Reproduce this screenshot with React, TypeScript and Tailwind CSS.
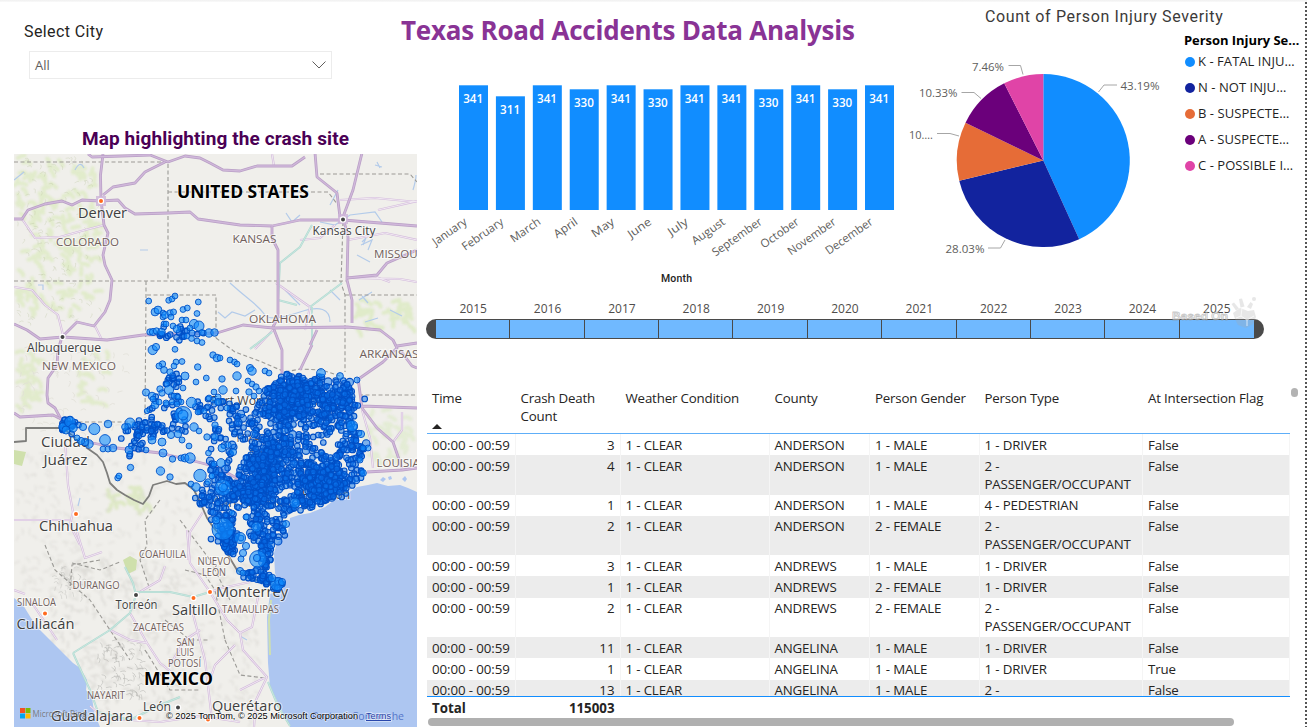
import React from "react";

/* ---------- shared data ---------- */

const months: [string, number][] = [
  ["January", 341], ["February", 311], ["March", 341], ["April", 330],
  ["May", 341], ["June", 330], ["July", 341], ["August", 341],
  ["September", 330], ["October", 341], ["November", 330], ["December", 341],
];
const monthWidths = [39, 48, 34, 26, 25, 26, 22, 38, 58, 44, 56, 55];

const severity = [
  { label: "K - FATAL INJU…", pct: 43.19, color: "#118dff" },
  { label: "N - NOT INJU…", pct: 28.03, color: "#12239e" },
  { label: "B - SUSPECTE…", pct: 10.99, color: "#e66c37" },
  { label: "A - SUSPECTE…", pct: 10.33, color: "#6b007b" },
  { label: "C - POSSIBLE I…", pct: 7.46, color: "#e044a7" },
];

const years = [2015, 2016, 2017, 2018, 2019, 2020, 2021, 2022, 2023, 2024, 2025];

const rows: string[][] = [
  ["3", "ANDERSON", "1 - MALE", "1 - DRIVER", "False"],
  ["4", "ANDERSON", "1 - MALE", "2 - PASSENGER/OCCUPANT", "False"],
  ["1", "ANDERSON", "1 - MALE", "4 - PEDESTRIAN", "False"],
  ["2", "ANDERSON", "2 - FEMALE", "2 - PASSENGER/OCCUPANT", "False"],
  ["3", "ANDREWS", "1 - MALE", "1 - DRIVER", "False"],
  ["1", "ANDREWS", "2 - FEMALE", "1 - DRIVER", "False"],
  ["2", "ANDREWS", "2 - FEMALE", "2 - PASSENGER/OCCUPANT", "False"],
  ["11", "ANGELINA", "1 - MALE", "1 - DRIVER", "False"],
  ["1", "ANGELINA", "1 - MALE", "1 - DRIVER", "True"],
  ["13", "ANGELINA", "1 - MALE", "2 - PASSENGER/OCCUPANT", "False"],
];

const GRID = "grid grid-cols-[88.5px_105px_149px_100.5px_109.5px_163.5px_147px]";

/* ---------- map geometry ---------- */

type P = [number, number];
type Dot = [number, number, number];

function rng(seed: number) {
  let s = seed;
  return () => {
    s = (s * 1664525 + 1013904223) % 4294967296;
    return s / 4294967296;
  };
}

function inside(x: number, y: number, poly: P[]) {
  let c = false;
  for (let i = 0, j = poly.length - 1; i < poly.length; j = i++) {
    const [xi, yi] = poly[i];
    const [xj, yj] = poly[j];
    if (yi > y !== yj > y && x < ((xj - xi) * (y - yi)) / (yj - yi) + xi) c = !c;
  }
  return c;
}

const eastTexas: P[] = [
  [272, 382], [278, 375], [296, 373], [306, 378], [320, 375], [334, 381], [342, 378], [355, 382], [356, 412], [352, 422],
  [362, 434], [368, 447], [362, 458], [352, 462], [364, 470], [362, 478], [346, 486], [338, 494], [326, 502],
  [311, 509], [292, 512], [284, 518], [276, 508], [262, 506], [246, 502], [232, 496], [228, 478], [240, 468], [246, 455],
  [252, 438], [248, 424], [254, 408], [264, 398],
];
const hillCountry: P[] = [
  [208, 398], [240, 404], [258, 415], [248, 440], [232, 462], [240, 500], [212, 514], [203, 505], [196, 490], [210, 480],
  [209, 440],
];
const southTexas: P[] = [[212, 506], [236, 508], [234, 545], [228, 556], [218, 534], [210, 520]];
const coastBend: P[] = [[248, 514], [262, 506], [284, 522], [286, 536], [276, 544], [262, 546], [250, 540]];
const valleyWest: P[] = [[224, 530], [238, 528], [236, 550], [232, 560], [224, 545]];
const valleyEast: P[] = [[260, 540], [272, 544], [270, 574], [284, 584], [276, 590], [262, 582], [240, 577], [248, 572], [262, 568]];
const holes: Dot[] = [
  [299, 425, 5], [270, 426, 3.5], [317, 442, 4], [330, 448, 6], [285, 492, 4.5], [295, 446, 3], [337, 437, 4], [276, 434, 2.5],
  [342, 461, 3], [226, 432, 5], [222, 456, 5], [232, 474, 4], [305, 457, 3], [310, 431, 3], [221, 415, 4],
];

function buildRandomDots(): Dot[] {
  const r = rng(77);
  const out: Dot[] = [];
  const fill = (poly: P[], n: number) => {
    const xs = poly.map((p) => p[0]);
    const ys = poly.map((p) => p[1]);
    const x0 = Math.min(...xs), x1 = Math.max(...xs), y0 = Math.min(...ys), y1 = Math.max(...ys);
    let k = 0;
    while (k < n) {
      const x = x0 + r() * (x1 - x0);
      const y = y0 + r() * (y1 - y0);
      if (!inside(x, y, poly)) continue;
      if (holes.some((h) => Math.hypot(h[0] - x, h[1] - y) < h[2] + 2)) { k += 0.2; continue; }
      out.push([x, y, r() < 0.08 ? 3.8 : 2.8]);
      k++;
    }
  };
  const cluster = (cx: number, cy: number, sx: number, sy: number, n: number) => {
    for (let i = 0; i < n; i++) {
      const gx = r() + r() + r() - 1.5;
      const gy = r() + r() + r() - 1.5;
      out.push([cx + gx * sx * 2, cy + gy * sy * 2, 2.8]);
    }
  };
  fill(eastTexas, 850);
  fill(hillCountry, 110);
  fill(southTexas, 50);
  fill(coastBend, 75);
  fill(valleyWest, 26);
  fill(valleyEast, 70);
  cluster(291, 401, 13, 10, 230);
  cluster(323, 482, 11, 8, 210);
  cluster(267, 470, 8, 11, 110);
  cluster(252, 493, 9, 6, 110);
  cluster(330, 404, 14, 10, 70);
  cluster(276, 450, 9, 10, 50);
  cluster(160, 427, 10, 5, 36);
  cluster(136, 435, 8, 9, 28);
  cluster(68, 426, 4, 4, 22);
  cluster(173, 379, 4, 4, 14);
  cluster(178, 333, 11, 3.5, 20);
  cluster(206, 409, 5, 5, 14);
  cluster(166, 412, 11, 8, 16);
  cluster(226, 539, 6, 8, 20);
  cluster(204, 500, 5, 6, 12);
  return out;
}

const fixedDots: Dot[] = [
  [148.7, 301, 2.9], [168.7, 300.3, 2.9], [172, 299, 2.9], [175, 296, 2.9], [198.3, 302, 2.9], [183, 309.5, 2.9], [187.3, 308, 2.9],
  [197, 313.5, 2.9], [155, 312, 3.9], [158, 310, 3.9], [163, 313, 2.9], [163, 317, 2.9], [165, 315, 3.6], [170, 313, 3.2], [173.5, 312, 3],
  [171, 317, 2.9], [164, 324, 2.9], [166, 324, 2.9], [182, 320, 2.9], [186, 320, 2.9], [194, 324, 4.6], [199, 326, 5], [190, 328, 2.9],
  [150, 332, 3.2], [153, 332, 3.6], [156.5, 331, 3.2], [161.5, 332, 3.8], [173, 326, 2.9], [177, 329, 3.8], [192, 333, 3], [202, 332.5, 3],
  [209, 333, 4.2], [214.5, 332.5, 3.8], [187, 336, 2.9], [191.5, 338.5, 2.9], [197, 341, 2.9], [202, 342.5, 2.9],
  [152.7, 350, 4.6], [156, 347, 3.6], [175, 349.3, 2.9], [162.5, 364, 3.2], [159, 366, 3], [164, 370, 3.4], [176, 362, 2.9], [182, 361.5, 2.9],
  [174, 366, 2.9], [197.7, 367, 3.2], [206.3, 378, 2.9], [196, 382, 2.9], [185, 376, 4], [170, 372, 3.2], [167, 384, 2.9], [183, 388, 2.9],
  [146, 392.5, 3.6], [152, 396, 3.8], [153, 399, 2.9], [160, 389, 3.2], [162, 393, 3.2], [169, 390, 4.6], [174, 396, 2.9], [178, 397, 2.9],
  [181, 402, 2.9], [191.5, 402.5, 5.2], [147, 411, 2.7], [155, 405, 3.8], [159, 402, 2.9], [166, 403, 3], [172, 402, 2.9], [177, 404, 2.9],
  [183, 415, 8.5], [183, 415, 5], [194, 427, 4.2], [199, 431, 2.9], [198, 412, 2.9], [204, 411, 2.9],
  [83, 427, 3.6], [94.3, 429, 5.6], [108, 424, 3.8], [105, 440, 5.4], [89, 444, 4.2], [85, 442, 3.8], [81, 441, 3.6], [77, 438, 3],
  [103, 449, 2.9], [108, 449, 3], [113, 448, 3.8], [63, 427, 4.2], [70, 422, 5.4], [73, 428, 4.2], [66, 430, 4],
  [129, 450, 4], [130, 423, 5], [125, 427, 3.4], [146, 450, 2.9], [163, 453, 4], [172.5, 459, 3.2], [181, 458, 3], [185, 458, 4], [190, 458, 5.2],
  [189, 446, 2.9], [208.5, 453, 2.9], [117.7, 478, 2.9], [119, 476, 2.9], [130.5, 467.5, 3.2], [160.5, 471, 4.2], [170, 477, 3.2],
  [200, 475.5, 6.2], [208, 482, 3.2], [191, 484, 2.9], [196, 487, 4.2], [212, 476, 3], [171, 435, 3.6], [178, 434, 3.8], [182, 440, 3], [162, 442, 4],
  [152, 440, 4], [207, 437, 3.2], [215, 425, 3.2], [213, 400, 3], [209, 398, 2.9], [214, 392, 2.9],
  [213, 355, 3.2], [217, 358, 3.8], [220, 358, 2.9], [230, 360, 2.9], [234.5, 362, 2.9], [237, 364, 2.9], [250, 368, 3.6], [252, 371, 4.2],
  [222, 379, 3.2], [237, 376, 4.2], [248, 381, 2.9], [252, 384, 2.9], [256, 387, 3.2], [259, 391, 2.9], [265, 371, 2.9], [269, 373, 2.9], [223, 390, 4.2],
  [236, 391, 2.9], [249, 392, 3.2], [218, 397, 3], [254, 396, 2.9], [218, 402, 3.6], [227, 408, 3], [321, 373, 4.4], [215, 437, 3.6], [222, 448, 4],
  [228, 445, 3.2], [233, 452, 3.6], [214, 464, 3], [221, 463, 4.4], [212, 476, 2.9], [223, 487.5, 8], [223, 487.5, 4.4], [223, 529, 11], [216, 520, 4],
  [232, 513, 2.9], [247, 517, 3.2], [256.5, 527, 5], [246, 517, 3], [295, 503, 5], [240, 538, 5.6], [246, 546, 3.6], [243, 553, 3.6], [241, 559, 3],
  [258, 559, 8.4], [257, 558, 3.6], [240, 571, 3.6], [243, 573, 3], [277, 584, 6.6], [282, 582, 3.6], [272, 578, 3.8], [352, 426, 5.6],
  [361, 434, 3.6], [368, 448, 3], [363, 448, 3], [360, 460, 3], [357, 380, 3], [340, 376, 3.4], [363, 473, 3.4], [286, 524, 3.6],
];

function buildRelief() {
  const r = rng(9);
  const areas: { box: [number, number, number, number]; n: number; color: string; len: number; w: number; o: number; soft?: boolean }[] = [
    { box: [16, 158, 96, 310], n: 150, color: "#cde6a0", len: 7, w: 4, o: 0.42, soft: true },
    { box: [16, 156, 100, 325], n: 130, color: "#b3bf98", len: 4, w: 0.7, o: 0.4 },
    { box: [14, 352, 40, 406], n: 30, color: "#d3e8ae", len: 7, w: 4, o: 0.5, soft: true },
    { box: [78, 350, 108, 416], n: 18, color: "#d3e8ae", len: 7, w: 4, o: 0.5, soft: true },
    { box: [106, 484, 152, 508], n: 20, color: "#cfe4a8", len: 7, w: 4, o: 0.55, soft: true },
    { box: [352, 298, 410, 330], n: 34, color: "#d0e8a8", len: 7, w: 4, o: 0.5, soft: true },
    { box: [365, 410, 410, 464], n: 30, color: "#d8eabf", len: 7, w: 4, o: 0.5, soft: true },
    { box: [14, 450, 195, 595], n: 240, color: "#dad9d4", len: 5, w: 1.4, o: 0.6, soft: true },
    { box: [50, 560, 175, 722], n: 280, color: "#d2d1cc", len: 6, w: 1.6, o: 0.6, soft: true },
    { box: [170, 560, 258, 722], n: 200, color: "#d8d7d2", len: 5, w: 1.5, o: 0.6, soft: true },
    { box: [98, 640, 146, 696], n: 90, color: "#b5b4b0", len: 5, w: 0.9, o: 0.6 },
    { box: [52, 560, 84, 600], n: 40, color: "#bdbcb8", len: 4, w: 0.9, o: 0.5 },
    { box: [14, 345, 130, 435], n: 80, color: "#e0ded6", len: 5, w: 1, o: 0.7 },
  ];
  return areas.map((a) => {
    let d = "";
    for (let i = 0; i < a.n; i++) {
      const x = a.box[0] + r() * (a.box[2] - a.box[0]);
      const y = a.box[1] + r() * (a.box[3] - a.box[1]);
      const t = r() * 2.4 - 0.4;
      const dx = Math.cos(t) * a.len;
      const dy = Math.sin(t) * a.len;
      d += `M${x.toFixed(1)} ${y.toFixed(1)}q${(dx / 2 + r() * 3).toFixed(1)} ${(dy / 2 - r() * 3).toFixed(1)} ${dx.toFixed(1)} ${dy.toFixed(1)}`;
    }
    return { d, color: a.color, w: a.w, o: a.o, soft: a.soft };
  });
}

const denseDots = buildRandomDots();
const relief = buildRelief();

const highways = [
  "M103 154L100.500 175 101 200 104 225 108 233 103 255 105 265 112 280 110 300 105 312 94 326 77 322 62 337 58 350 57 365 48 378 47 395 48 403 55 408 63 423",
  "M14 219H22L28 210 45 204 62 201 72 205 82 200 100 201 118 200 125 208 135 214 168 213 190 212 198 219 240 225 272 226 300 220 343 220 417 226",
  "M103 195L113 187 135 183 145 172 165 162M88 154L92 157 150 155 168 162 185 156 200 158 210 163 223 170 240 171 257 166 292 166 305 157",
  "M272 226V238L278 250V317L273 327 282 350 282 375",
  "M315 153L317 177 337 193 340 217M362 153L353 190 343 217 348 237 347 280 352 300 352 323",
  "M273 328L347 327 380 330 393 340 397 348 383 362 360 378M397 346L417 343M273 328L243 325 217 333 143 335 107 340 63 337 40 339 27 330 14 324",
  "M347 278L377 275 387 263 417 250",
  "M14 413L20 417 53 415 63 420M88 442L117 448 160 453 190 460 217 467 240 480",
  "M358 378L362 408 377 428 393 442 402 468M362 406L417 408M367 472L402 470 417 468",
  "M312 345L300 370M317 330L310 345M400 350L412 366 417 368",
];
const minorRoads = [
  "M14 287L32 290 45 305 58 315 63 335M22 219L35 238 60 237 85 230 104 225",
  "M65 440L68 485 73 512 70 525 80 545M14 520L70 520",
  "M378 210L417 201M340 200L375 198 417 202M348 240L385 233 417 240M300 240L320 238 335 225",
  "M373 468L370 438 362 410M402 412L402 430 393 442M276 283L310 307 305 330M255 349L273 330M95 326L102 340M272 154L274 166",
  "M77 532L85 558 102 552M187 530L190 563 210 592 227 620 240 633 243 650 267 677 256 700 254 727M240 633L252 627 258 597",
  "M130 613L147 643 160 663 175 675M110 630L130 640 147 643M138 593L160 580 165 566M203 512L190 532 188 560",
  "M170 665L185 640 200 630M235 645L215 665 210 680M240 690L264 678M30 600L57 640M192 610L205 660 212 720",
  "M90 706L105 719 130 720 160 722 200 716 240 722M14 590L25 594M250 582L222 588 210 592M352 278L400 279 417 282M376 277L390 282",
];
const tealRoads = [
  "M125 567L133 583 136 595 130 613 110 630 73 653M136 592L170 592 193 597 210 592",
  "M312 225L300 247 280 263 278 300 297 305M310 307L342 283M73 653L90 690 98 712 130 720 160 705 180 697M268 682L278 706 290 726M250 349L272 332M312 307L312 345",
];
const rivers = [
  "M230 283Q240 292 250 300T265 315 300 312 330 322M218 312L225 318 232 312 245 316 255 310M320 222L335 225 350 215 375 212 382 222",
  "M286 213L292 222 300 215M361 245L372 240 368 250M357 255L370 262M285 290L300 305M330 290L340 300M300 440L310 448",
  "M140 250L148 250M38 285H43V290M80 498L78 506M240 636L247 640M375 165L382 167M377 162L380 168M330 205L338 190M363 245L366 238 362 242",
  "M359 300L372 292M362 296L368 303M390 310L402 316M365 322L378 318M413 190Q416 180 416 175M14 180L24 172M75 170Q80 160 84 168",
];
const stateLines =
  "M14 162H168V281M14 281H347M168 192H328L338 205M146 281V295L145 418M147 295H216V338M72 422H145M320 174H410L417 182M343 222L341 283 345 295V327L345 372M345 295H417M216 338L235 352 262 362 285 372 300 369 322 370 340 376M359 395H417" +
  "M72 563L100 570 120 562M160 500L145 520 147 545 140 560 150 590M45 545L55 570 90 600 130 660M185 570L205 575 215 590 225 640M165 620L190 640 210 640M145 650L170 690 200 690M225 640L240 675 265 678M100 560L72 565 70 590M180 520L210 560 230 600";

interface MapLabel { t: string; x: number; y: number; w: number; s: number; k: "city" | "state" | "country" }
const labels: MapLabel[] = [
  { t: "Denver", x: 78, y: 217.5, w: 49, s: 14.5, k: "city" },
  { t: "Kansas City", x: 312.5, y: 235, w: 63, s: 12.5, k: "city" },
  { t: "Albuquerque", x: 27, y: 351.5, w: 74, s: 13, k: "city" },
  { t: "Ciudad", x: 41, y: 447, w: 49, s: 14.5, k: "city" },
  { t: "Juárez", x: 43.5, y: 464.5, w: 44, s: 14.5, k: "city" },
  { t: "Chihuahua", x: 39, y: 530.5, w: 74, s: 14.5, k: "city" },
  { t: "Torreón", x: 115.5, y: 609, w: 42, s: 12.5, k: "city" },
  { t: "Saltillo", x: 172, y: 614.5, w: 45, s: 14, k: "city" },
  { t: "Monterrey", x: 216, y: 597, w: 72, s: 14.5, k: "city" },
  { t: "Culiacán", x: 16.5, y: 628.5, w: 58, s: 14.5, k: "city" },
  { t: "Guadalajara", x: 51, y: 721, w: 82, s: 14, k: "city" },
  { t: "León", x: 143, y: 711, w: 28, s: 13, k: "city" },
  { t: "Querétaro", x: 212, y: 711, w: 70, s: 14, k: "city" },
  { t: "Fort Worth", x: 211, y: 404.5, w: 62, s: 13, k: "city" },
  { t: "Dallas", x: 300, y: 405, w: 34, s: 13, k: "city" },
  { t: "Austin", x: 248, y: 458, w: 36, s: 13, k: "city" },
  { t: "San Antonio", x: 214, y: 507, w: 74, s: 13, k: "city" },
  { t: "Houston", x: 302, y: 499, w: 48, s: 13, k: "city" },
  { t: "COLORADO", x: 56, y: 245.5, w: 63, s: 11.5, k: "state" },
  { t: "KANSAS", x: 232.5, y: 243, w: 44, s: 11.5, k: "state" },
  { t: "MISSOURI", x: 374, y: 257.5, w: 54, s: 11.5, k: "state" },
  { t: "OKLAHOMA", x: 249, y: 323, w: 67, s: 11.5, k: "state" },
  { t: "ARKANSAS", x: 359.5, y: 357.5, w: 59, s: 11.5, k: "state" },
  { t: "NEW MEXICO", x: 42, y: 369.5, w: 74, s: 11.5, k: "state" },
  { t: "TEXAS", x: 235, y: 442, w: 32, s: 11.5, k: "state" },
  { t: "LOUISIANA", x: 376.5, y: 466.5, w: 59, s: 11.5, k: "state" },
  { t: "COAHUILA", x: 139, y: 558, w: 47, s: 10, k: "state" },
  { t: "NUEVO", x: 197.5, y: 565, w: 33, s: 10, k: "state" },
  { t: "LEÓN", x: 202, y: 575.5, w: 24, s: 10, k: "state" },
  { t: "DURANGO", x: 72.5, y: 589, w: 47, s: 10, k: "state" },
  { t: "SINALOA", x: 17, y: 606, w: 39, s: 10, k: "state" },
  { t: "TAMAULIPAS", x: 222, y: 612.5, w: 57, s: 10, k: "state" },
  { t: "ZACATECAS", x: 133, y: 631, w: 51, s: 10, k: "state" },
  { t: "SAN", x: 176.5, y: 645.5, w: 18, s: 10, k: "state" },
  { t: "LUIS", x: 176, y: 656, w: 18, s: 10, k: "state" },
  { t: "POTOSÍ", x: 168, y: 667, w: 33, s: 10, k: "state" },
  { t: "NAYARIT", x: 87, y: 698.5, w: 38, s: 10, k: "state" },
  { t: "UNITED STATES", x: 177, y: 198, w: 132, s: 18, k: "country" },
  { t: "MEXICO", x: 144, y: 685, w: 69, s: 18.5, k: "country" },
];
const labelClass = {
  city: "fill-[#3f3f3f] font-medium",
  state: "fill-[#71605c] font-medium",
  country: "fill-black font-bold",
};

const cityDots: [number, number, string][] = [
  [101, 201, "#ff6a1f"], [343, 219.5, "#444"], [62.5, 337, "#444"], [76, 514, "#ff6a1f"], [45, 613.5, "#ff6a1f"],
  [136, 595, "#444"], [193.5, 598, "#ff6a1f"], [210, 592, "#ff6a1f"], [178, 707.5, "#444"], [139.5, 718, "#ff6a1f"], [208, 719.5, "#ff6a1f"],
];

function CrashMap() {
  return (
    <svg viewBox="14 154 403 573" className="ml-[14px] block h-[573px] w-[403px] shrink-0 font-['Open_Sans','Noto_Sans',sans-serif]">
      <rect x="14" y="154" width="403" height="573" fill="#f0efeb" />
      {relief.map((a, i) => (
        <path
          key={i} d={a.d} fill="none" stroke={a.color} strokeWidth={a.w} strokeOpacity={a.o} strokeLinecap="round"
          className={a.soft ? "blur-[0.8px]" : undefined}
        />
      ))}
      <path d="M123 560L130 556 137 560 136 570 128 574ZM14 450L26 452 22 466 14 464Z" fill="#cfe0ac" />
      <g fill="#adc6f1">
        <path d="M417 492L408 488 400 485 388 486 377 483 368 485 357 487 348 493 337 498 325 507 310 513 299 515 290 518 288 532 277 543 274 553 275 573 281 590 270 594 267 617 268 663 270 687 278 703 290 727H417Z" />
        <path d="M14 598L23 605 31 618 40 630 57 647 73 663 80 668 87 680 86 690 92 697 94 712 100 727H14Z" />
        <path d="M380 480l3-3 3 2-3 3zM388 477l3-1 1 3-3 1zM402 479l3-3 2 3-2 3z" />
      </g>
      <path d="M271 600L269 620 270 655" fill="none" stroke="#cfe0b0" strokeWidth="2" />
      {rivers.map((d) => <path key={d} d={d} fill="none" stroke="#b3cbea" strokeWidth="1.2" />)}
      <path d={stateLines} fill="none" stroke="#9b9a96" strokeWidth="1.1" strokeDasharray="4 2.5" />
      {minorRoads.map((d) => (
        <g key={d} fill="none" strokeLinejoin="round">
          <path d={d} stroke="#d3bbdc" strokeWidth="2.2" />
          <path d={d} stroke="#f4edf4" strokeWidth="0.9" />
        </g>
      ))}
      {tealRoads.map((d) => (
        <g key={d} fill="none" strokeLinejoin="round">
          <path d={d} stroke="#afd9d0" strokeWidth="2" />
          <path d={d} stroke="#d3ece6" strokeWidth="0.7" />
        </g>
      ))}
      {highways.map((d) => (
        <g key={d} fill="none" strokeLinejoin="round">
          <path d={d} stroke="#b99fc6" strokeWidth="2.8" />
          <path d={d} stroke="#d0b8da" strokeWidth="1.3" />
        </g>
      ))}
      <path
        d="M14 442L26 441V428H63L75 438 87 448 97 455 103 462 107 473 110 483 117 490 125 495 134 500 143 504 149 496 153 485 160 483 167 481 176 484 185 483 194 490 200 502 207 518 213 527 220 535 228 555 237 570 248 577 270 585"
        fill="none" stroke="#7d7d7b" strokeWidth="1.8" strokeLinejoin="round"
      />
      <path d="M96 196h10v10h-10zM338 214h10v10h-10z" fill="#cdb4d8" fillOpacity="0.8" />
      {cityDots.map(([x, y, c]) => (
        <circle key={`${x}-${y}`} cx={x} cy={y} r="2.6" fill={c} stroke="#fff" strokeWidth="1.2" />
      ))}
      {labels.map((l) => (
        <text
          key={l.t} x={l.x} y={l.y} fontSize={l.s} textLength={l.w} lengthAdjust="spacingAndGlyphs"
          stroke="#ffffff" strokeOpacity="0.6" strokeWidth="2" paintOrder="stroke" className={labelClass[l.k]}
        >
          {l.t}
        </text>
      ))}
      <g fill="#0a74ee" fillOpacity="0.5" stroke="#004fc6" strokeWidth="1.1">
        {denseDots.map(([x, y, r], i) => <circle key={i} cx={x.toFixed(1)} cy={y.toFixed(1)} r={r} />)}
      </g>
      <g fill="#118dff" fillOpacity="0.6" stroke="#0052c8" strokeOpacity="0.9" strokeWidth="1">
        {fixedDots.map(([x, y, r], i) => <circle key={i} cx={x} cy={y} r={r} />)}
      </g>
      <path d="M20 708h5v5h-5z" fill="#f25022" />
      <path d="M25.500 708h5v5h-5z" fill="#7fba00" />
      <path d="M20 713.500h5v5h-5z" fill="#00a4ef" />
      <path d="M25.500 713.500h5v5h-5z" fill="#ffb900" />
      <text x="32.5" y="716.5" fontSize="9" textLength="54" lengthAdjust="spacingAndGlyphs" fill="#737373" fillOpacity="0.9">Microsoft Bing</text>
      <text x="312" y="720" fontSize="10.5" textLength="92" lengthAdjust="spacingAndGlyphs" fill="#5677c9">Port-au-Comanche</text>
      <g className="font-['Liberation_Sans',sans-serif]" fontSize="9.5" stroke="#fff" strokeOpacity="0.6" strokeWidth="1.5" paintOrder="stroke">
        <text x="166" y="719" textLength="192" lengthAdjust="spacingAndGlyphs" fill="#000">© 2025 TomTom, © 2025 Microsoft Corporation</text>
        <text x="366" y="719" textLength="25" lengthAdjust="spacingAndGlyphs" fill="#1f3fa8" textDecoration="underline">Terms</text>
      </g>
    </svg>
  );
}

function MonthBars() {
  return (
    <svg viewBox="427 58 473 232" className="block h-[232px] w-[473px] font-['Open_Sans','Noto_Sans',sans-serif]">
      {months.map(([m, v], i) => {
        const x = 459 + i * 36.91;
        const top = v === 341 ? 85.3 : v === 330 ? 89.3 : 96.3;
        return (
          <g key={m}>
            <rect x={x} y={top} width="29" height={210 - top} fill="#118dff" />
            <text x={x + 14.2} y={top + 17.7} fontSize="12" fontWeight="600" textAnchor="middle" textLength="20" lengthAdjust="spacingAndGlyphs" fill="#fff">{v}</text>
            <text
              transform={`translate(${x + 9.5} 223) rotate(-35)`} x={-monthWidths[i] - 1} y="0" fontSize="11.5"
              textLength={monthWidths[i]} lengthAdjust="spacingAndGlyphs" fill="#605e5c"
            >
              {m}
            </text>
          </g>
        );
      })}
      <text x="661" y="282" fontSize="10.5" fontWeight="500" textLength="31" fill="#252423" className="font-['Roboto',sans-serif]">Month</text>
    </svg>
  );
}

function SeverityPie() {
  const cx = 1043.3, cy = 160.5, r = 86.5;
  let acc = 0;
  const at = (p: number) => {
    const a = (p / 100) * Math.PI * 2;
    return `${(cx + r * Math.sin(a)).toFixed(2)} ${(cy - r * Math.cos(a)).toFixed(2)}`;
  };
  return (
    <svg viewBox="900 30 280 240" className="block h-[240px] w-[280px] font-['Open_Sans','Noto_Sans',sans-serif]">
      {severity.map((s) => {
        const a = acc;
        acc += s.pct;
        return <path key={s.label} d={`M${cx} ${cy}L${at(a)}A${r} ${r} 0 0 1 ${at(acc)}Z`} fill={s.color} />;
      })}
      <g fill="none" stroke="#a6a6a6" strokeWidth="1">
        <path d="M1098.500 92L1104 85H1117" />
        <path d="M1008.500 65.500H1020.500L1023 74.500" />
        <path d="M961.500 92.500H974L981 98.500" />
        <path d="M937 133.500H950L959 136" />
        <path d="M988 248H1000.500L1005 240" />
      </g>
      <g fill="#605e5c" fontSize="11.5">
        <text x="1120.5" y="90" textLength="39" lengthAdjust="spacingAndGlyphs">43.19%</text>
        <text x="972" y="71" textLength="32" lengthAdjust="spacingAndGlyphs">7.46%</text>
        <text x="919" y="97" textLength="38.5" lengthAdjust="spacingAndGlyphs">10.33%</text>
        <text x="909" y="139" textLength="24" lengthAdjust="spacingAndGlyphs">10….</text>
        <text x="945.5" y="253" textLength="39" lengthAdjust="spacingAndGlyphs">28.03%</text>
      </g>
    </svg>
  );
}

function Timeline() {
  return (
    <div className="relative h-[99px]">
      <div className="flex pt-[9px] pl-[9px]">
        {years.map((y) => (
          <span key={y} className="w-[74.36px] text-center text-[12px] leading-[20px] text-[#4f4d4b]">{y}</span>
        ))}
      </div>
      <div className="-ml-px flex h-5 w-[838px]">
        <span className="w-[10px] rounded-l-full bg-[#4a4a4a]" />
        <span className="flex flex-1 border-y border-[#4a4a4a]">
          {years.map((y, i) => (
            <span
              key={y}
              className={i === 10 ? "w-[74.36px] bg-[#70b9ff]" : "w-[74.36px] border-r border-[#4a4a4a] bg-[#70b9ff]"}
            />
          ))}
        </span>
        <span className="w-[10px] rounded-r-full bg-[#4a4a4a]" />
      </div>
      <svg viewBox="1168 294 92 34" className="absolute top-[4px] left-[741px] h-[34px] w-[92px]">
        <text x="1172" y="319.5" fontSize="11.5" fontWeight="700" textLength="56" lengthAdjust="spacingAndGlyphs" fill="#e4e4e4" fillOpacity="0.5" stroke="#8a8a8a" strokeOpacity="0.45" strokeWidth="0.8" className="font-['Liberation_Sans',sans-serif]">Based On</text>
        <g fill="#a8a8a8" fillOpacity="0.28">
          <circle cx="1254" cy="299" r="2" />
          <path d="M1231.500 304l2.500-1.500 5 6-3 2zM1239 299l3-.5 2.500 8-4 1zM1247 307l3.500-5 2.500 2-2 5z" />
          <path d="M1233 313l7-5 8 3 6-1 2 7-3 7-7 4-8-3-3-6z" />
        </g>
        <path d="M1242 308l-1 8 6 4 7-4M1241 316l-5 2M1247 320v6" fill="none" stroke="#fff" strokeOpacity="0.7" strokeWidth="1" />
      </svg>
    </div>
  );
}

const headers = ["Time", "Crash Death Count", "Weather Condition", "County", "Person Gender", "Person Type", "At Intersection Flag"];

function CrashTable() {
  return (
    <div className="flex h-[338px] text-[13.3px] leading-[18px] text-[#252423]">
      <div className="flex w-[863px] flex-col">
        <div className={`${GRID} h-[45px] shrink-0 border-b border-[#5eaef8]`}>
          {headers.map((h, i) => (
            <div key={h} className="pr-2 pl-[5px] tracking-[-0.18px]">
              {h}
              {i === 0 && (
                <svg viewBox="0 0 10 5" className="mt-[17px] h-[5px] w-[10px]"><path d="M0 5L5 0 10 5Z" fill="#252423" /></svg>
              )}
            </div>
          ))}
        </div>
        <div className="h-[262px] shrink-0 overflow-hidden">
          {rows.map((r, i) => {
            const cells = ["00:00 - 00:59", r[0], "1 - CLEAR", r[1], r[2], r[3], r[4]];
            return (
              <div key={i} className={i % 2 ? `${GRID} bg-[#ececec]` : `${GRID} bg-white`}>
                {cells.map((c, j) => (
                  <div
                    key={j}
                    className={
                      j === 1
                        ? "border-r border-[#f5f5f5] py-[1.65px] pr-[5px] text-right"
                        : j === 0
                          ? "border-r border-[#f5f5f5] py-[1.65px] pl-[5px] tracking-[-0.1px]"
                          : "border-r border-[#f5f5f5] py-[1.65px] pr-2 pl-[5px] tracking-[-0.16px]"
                    }
                  >
                    {c}
                  </div>
                ))}
              </div>
            );
          })}
        </div>
        <div className={`${GRID} h-[22px] shrink-0 border-t border-[#118dff] pt-[2px] font-bold`}>
          <div className="pl-[5px]">Total</div>
          <div className="pr-[6px] text-right">115003</div>
        </div>
        <div className="ml-px h-[8px] w-[806px] shrink-0 rounded-full bg-[#b0b0b0]" />
      </div>
      <div className="-mt-px ml-[1px] h-[9px] w-[7px] rounded-full bg-[#b3b3b3]" />
    </div>
  );
}

export default function App() {
  return (
    <div className="flex h-[727px] w-[1307px] flex-col overflow-hidden bg-white font-['Open_Sans','Noto_Sans',sans-serif]">
      <div className="h-[2px] shrink-0 bg-gradient-to-b from-[#f0f0f0] to-[#fafafa]" />
      <div className="flex h-[725px]">
        <aside className="flex w-[427px] shrink-0 flex-col">
          <h2 className="mt-5 ml-6 font-['Roboto',sans-serif] text-[16px] leading-5 tracking-[0.4px] text-[#252423]">Select City</h2>
          <div className="mt-[9px] ml-[29px] flex h-7 w-[303px] items-center justify-between border border-[#ececec] pr-[5px] pl-[5px]">
            <span className="pt-[2px] text-[13px] text-[#605e5c]">All</span>
            <svg viewBox="0 0 14 8" className="h-2 w-[14px]"><path d="M0.500 0.500L7 7 13.500 0.500" fill="none" stroke="#605e5c" strokeWidth="1" /></svg>
          </div>
          <h2 className="mt-[48px] mb-[3px] h-6 pl-1 text-center font-['Roboto',sans-serif] text-[19px] leading-6 font-bold tracking-[0.1px] text-[#4b0055]">Map highlighting the crash site</h2>
          <CrashMap />
        </aside>
        <main className="flex w-[878px] shrink-0 flex-col">
          <div className="flex h-[288px]">
            <section className="w-[473px]">
              <h1 className="-ml-[26px] h-14 pt-[9px] text-[26px] leading-[38px] font-bold tracking-[-0.23px] whitespace-nowrap text-[#893395]">
                Texas Road Accidents Data Analysis
              </h1>
              <MonthBars />
            </section>
            <section className="w-[405px]">
              <h2 className="h-7 pt-[5px] pl-[85px] font-['Roboto',sans-serif] text-[16px] leading-5 tracking-[0.65px] text-[#3b3a39]">Count of Person Injury Severity</h2>
              <div className="flex">
                <SeverityPie />
                <div className="pl-1">
                  <h3 className="h-[19px] text-[13px] leading-5 font-bold tracking-[-0.05px] whitespace-nowrap text-black">Person Injury Se…</h3>
                  <ul className="flex flex-col">
                    {severity.map((s) => (
                      <li key={s.label} className="flex h-[26px] items-center gap-[3px] text-[13px] tracking-[0.05px] whitespace-nowrap text-[#1f1f1f]">
                        <svg viewBox="0 0 10 10" className="ml-px h-[10px] w-[10px]"><circle cx="5" cy="5" r="5" fill={s.color} /></svg>
                        {s.label}
                      </li>
                    ))}
                  </ul>
                </div>
              </div>
            </section>
          </div>
          <Timeline />
          <CrashTable />
        </main>
        <div className="h-full w-[2px] bg-[repeating-linear-gradient(to_bottom,#555_0px,#555_2px,#fff_2px,#fff_4px)]" />
      </div>
    </div>
  );
}
